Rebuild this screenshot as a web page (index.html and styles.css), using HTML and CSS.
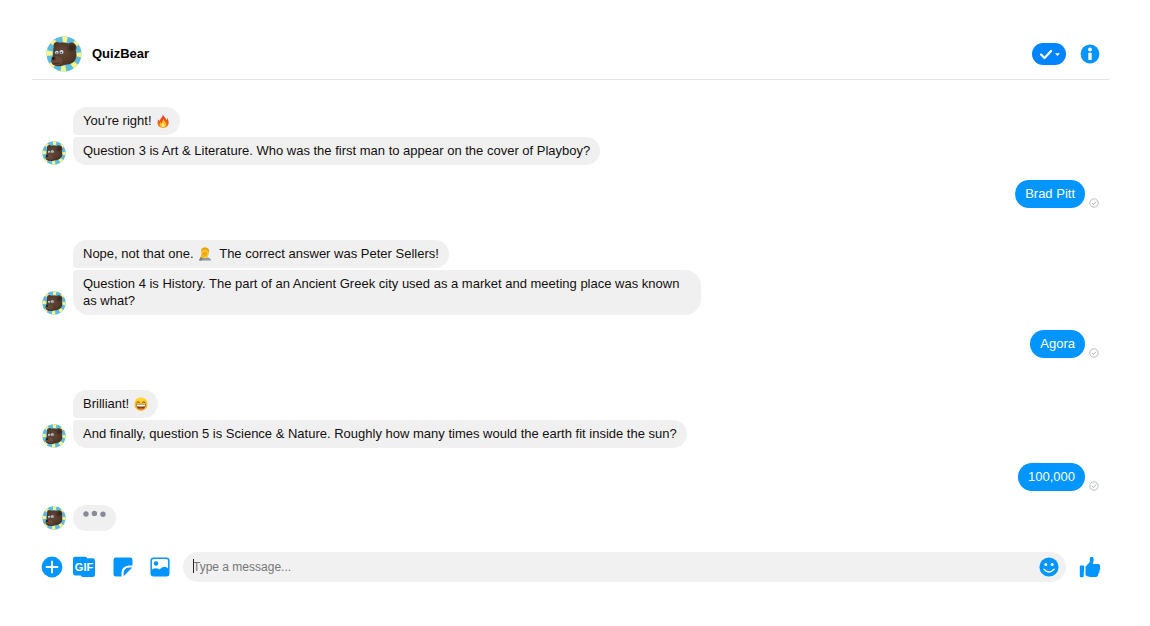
FILE: index.html
```html
<!DOCTYPE html>
<html lang="en">
<head>
<meta charset="utf-8">
<meta name="viewport" content="width=device-width, initial-scale=1">
<title>QuizBear</title>
<link rel="stylesheet" href="styles.css">
</head>
<body>
<svg class="symbols" aria-hidden="true">
  <defs>
    <radialGradient id="fur" cx="45%" cy="40%" r="65%"><stop offset="0" stop-color="#664839"/><stop offset="1" stop-color="#46301f"/></radialGradient>
    <linearGradient id="flame" x1="0" y1="0" x2="0" y2="1"><stop offset="0" stop-color="#e8321c"/><stop offset="1" stop-color="#ff7b16"/></linearGradient>
    <linearGradient id="smile" x1="0" y1="0" x2="0" y2="1"><stop offset="0" stop-color="#ffdc3d"/><stop offset="1" stop-color="#f5a11d"/></linearGradient>
  </defs>
  <symbol id="bear" viewBox="0 0 36 36">
    <circle cx="18" cy="18" r="17.500" fill="#5cbbdf"/>
    <circle cx="18" cy="18" r="14.500" fill="none" stroke="#f5f58c" stroke-width="6" stroke-dasharray="4.800 6.588" stroke-dashoffset="2"/>
    <circle cx="11" cy="9.500" r="3.500" fill="#4f382b"/>
    <path d="M7.500 12C9 7.500 14 6 19 6.800C26 7.500 30.500 13 30.500 19C30.500 25 26 28.800 19 28.800C15 30.800 8 30.800 6 27.500C4.500 24.500 6.500 22 7 19C7.500 16 7 14 7.500 12Z" fill="url(#fur)"/>
    <ellipse cx="11" cy="24.800" rx="5.500" ry="4.600" fill="#69493a"/>
    <ellipse cx="7.500" cy="22.500" rx="1.900" ry="1.400" fill="#2a1b14"/>
    <path d="M7.500 27.300Q11 28.800 14 26.500" fill="none" stroke="#3a261c" stroke-width=".8"/>
    <circle cx="10.800" cy="16.500" r="1.800" fill="#c4dfe8"/><circle cx="15.500" cy="16" r="2" fill="#c4dfe8"/>
    <circle cx="10.800" cy="17" r=".8" fill="#343a40"/><circle cx="15.300" cy="16.600" r=".8" fill="#343a40"/>
    <circle cx="25.500" cy="11.500" r="5" fill="#50382b"/>
    <circle cx="26" cy="11.800" r="3" fill="#3b281e"/>
  </symbol>
  <symbol id="seen" viewBox="0 0 10 10"><circle cx="5" cy="5" r="4.200" fill="none" stroke="#b2b5ba" stroke-width=".9"/><path d="M3 5.100L4.400 6.500L7 3.700" fill="none" stroke="#a8acb2" stroke-width="1"/></symbol>
</svg>

<main class="chat">
  <header class="header">
    <svg class="avatar-large" role="img" aria-label="QuizBear"><use href="#bear"/></svg>
    <h1 class="name">QuizBear</h1>
    <button class="done" type="button" aria-label="Mark as done">
      <svg width="34" height="22" viewBox="0 0 34 22"><path d="M9 11.500L12.500 15L19 8" fill="none" stroke="#fff" stroke-width="2.200" stroke-linecap="round" stroke-linejoin="round"/><path d="M23 10.200H28L25.500 13Z" fill="#fff"/></svg>
    </button>
    <button class="icon-button" type="button" aria-label="Information">
      <svg width="20" height="20" viewBox="0 0 20 20"><circle cx="10" cy="10" r="9.400" fill="#0095ff"/><circle cx="10" cy="5.500" r="1.900" fill="#fff"/><rect x="8.300" y="8.700" width="3.400" height="7.200" rx=".6" fill="#fff"/></svg>
    </button>
  </header>

  <section class="conversation" aria-label="Conversation">
    <div class="incoming">
      <svg class="avatar"><use href="#bear"/></svg>
      <div class="stack">
        <p class="bubble first">You're right! <svg class="emoji" role="img" aria-label="Fire" viewBox="0 0 16 16"><path d="M7.500 .5C9 3 12 5 11.500 7C12.500 6.500 12.800 5.500 12.700 4.500C16 9 15 15.500 8.200 15.700C1.500 15.700 .5 9.800 3 6C3.200 7 3.600 7.500 4.300 8C4.400 5 8.500 3.700 7.500 .5Z" fill="url(#flame)"/><path d="M8.200 5.500C9 8 12.500 10 11.500 13C10.800 15 9.500 15.200 8 15.200C4.500 15.200 3.300 12 5 9.500C5.500 10.500 6 11 6.700 11C6.500 9 8.500 8 8.200 5.500Z" fill="#ffc42b"/><path d="M8.200 10.500C8.800 12 10 12.500 9.500 14Q8.500 15 7.300 14.500Q5.800 13.500 7 12Z" fill="#fff1a0"/></svg></p>
        <p class="bubble last">Question 3 is Art &amp; Literature. Who was the first man to appear on the cover of Playboy?</p>
      </div>
    </div>
    <div class="outgoing"><p class="reply">Brad Pitt</p><svg class="seen"><use href="#seen"/></svg></div>

    <div class="incoming">
      <svg class="avatar"><use href="#bear"/></svg>
      <div class="stack">
        <p class="bubble first">Nope, not that one. <svg class="emoji" role="img" aria-label="Facepalm" viewBox="0 0 16 16"><path d="M2 15.500Q2.500 12 6 12H10.500Q14 12 15 15.500Z" fill="#8798a7"/><path d="M4 7Q3 1 8 .7Q13.500 1 12.200 8Q11.500 13 8.300 13Q4.500 12.500 4 7Z" fill="#ffc52d"/><path d="M3.800 6Q3 1 7 .6Q12 0 12.800 4L12.200 6.500Q11 3 8 3Q5 3 3.800 6Z" fill="#e5a719"/><path d="M1 15.500L3.500 10L4 6.500L9.500 4.800L10.500 5.700L7 7L10.800 6.800L10.800 7.800L7.500 8.600L10 9L7 11L5 14Z" fill="#f7b51d"/><path d="M1 15.500L3 11.500L5.500 13L4.500 15.500Z" fill="#718595"/><path d="M6 7.500L10 6.500M7 9.200L10 8.600" stroke="#c87f16" stroke-width=".6"/></svg>&nbsp; The correct answer was Peter Sellers!</p>
        <p class="bubble last">Question 4 is History. The part of an Ancient Greek city used as a market and meeting place was known as what?</p>
      </div>
    </div>
    <div class="outgoing"><p class="reply">Agora</p><svg class="seen"><use href="#seen"/></svg></div>

    <div class="incoming">
      <svg class="avatar"><use href="#bear"/></svg>
      <div class="stack">
        <p class="bubble first">Brilliant! <svg class="emoji" role="img" aria-label="Grinning face" viewBox="0 0 16 16"><circle cx="8" cy="8" r="7.600" fill="url(#smile)"/><path d="M3 6.500Q4.500 4 6.200 6.300M9.800 6.300Q11.500 4 13 6.500" fill="none" stroke="#633c17" stroke-width="1.100" stroke-linecap="round"/><path d="M2.500 8.200Q8 9 13.500 8.200Q13 14 8 14Q3 14 2.500 8.200Z" fill="#71391a"/><path d="M3 8.500Q8 9.300 13 8.500L12.500 10.600Q8 11.300 3.500 10.600Z" fill="#fff"/><path d="M5.500 13Q8 10.800 10.500 13Q8 14.500 5.500 13Z" fill="#e5563d"/></svg></p>
        <p class="bubble last">And finally, question 5 is Science &amp; Nature. Roughly how many times would the earth fit inside the sun?</p>
      </div>
    </div>
    <div class="outgoing"><p class="reply">100,000</p><svg class="seen"><use href="#seen"/></svg></div>

    <div class="incoming typing-row">
      <svg class="avatar"><use href="#bear"/></svg>
      <div class="typing" role="status" aria-label="QuizBear is typing"><svg width="24" height="8" viewBox="0 0 24 8"><g fill="#858c98"><circle cx="3" cy="4" r="2.700"/><circle cx="11.400" cy="3.400" r="2.700"/><circle cx="20" cy="4.300" r="2.700"/></g></svg></div>
    </div>
  </section>

  <form class="composer">
    <div class="tools">
      <button class="icon-button" type="button" aria-label="More actions"><svg width="22" height="22" viewBox="0 0 22 22"><circle cx="11" cy="11" r="10.400" fill="#0095ff"/><path d="M11 5.500V16.500M5.500 11H16.500" stroke="#fff" stroke-width="1.900" stroke-linecap="round"/></svg></button>
      <button class="gif" type="button"><svg class="gif-shape" viewBox="0 0 24 22" aria-hidden="true"><path d="M3 .8H13Q14.500 .8 15.200 2.200H20.500Q23 2.200 23 4.500V18.500Q23 21 20.500 21H11Q9.500 21 8.800 19.500H3.500Q1 19.500 1 17V3Q1 .8 3 .8Z" fill="#0095ff"/></svg><span class="gif-label">GIF</span></button>
      <button class="icon-button" type="button" aria-label="Sticker"><svg width="20" height="20" viewBox="0 0 20 20"><path d="M3 .6H17Q19.500 .6 19.500 3V8.500H16Q8.500 9 8.500 16V19.500H3Q.5 19.500 .5 17V3Q.5 .6 3 .6Z" fill="#0095ff"/><path d="M19.300 10.500L10.600 19.300V16Q10.800 11 16 10.500Z" fill="#0095ff"/></svg></button>
      <button class="icon-button" type="button" aria-label="Photo"><svg width="20" height="20" viewBox="0 0 20 20"><rect x="1.200" y="1.200" width="17.600" height="17.600" rx="2.500" fill="#fff" stroke="#0095ff" stroke-width="1.500"/><circle cx="6" cy="6.500" r="2.200" fill="#0095ff"/><path d="M1.200 13Q5 9.800 9.500 12.500Q14 7.500 18.800 12V17Q18.800 18.800 17 18.800H3Q1.200 18.800 1.200 17Z" fill="#0095ff"/></svg></button>
    </div>
    <div class="field">
      <input class="message" type="text" placeholder="Type a message..." aria-label="Message">
      <span class="caret" aria-hidden="true"></span>
      <button class="icon-button" type="button" aria-label="Emoji"><svg width="20" height="20" viewBox="0 0 20 20"><circle cx="10" cy="10" r="9.600" fill="#0095ff"/><circle cx="6.800" cy="7.500" r="1.500" fill="#fff"/><circle cx="13.200" cy="7.500" r="1.500" fill="#fff"/><path d="M5 12.200Q10 17.800 15 12.200" fill="none" stroke="#fff" stroke-width="1.500" stroke-linecap="round"/></svg></button>
    </div>
    <button class="icon-button" type="button" aria-label="Send a like"><svg width="22" height="22" viewBox="0 0 22 22"><path d="M2 9.500H4.200Q5.200 9.500 5.200 10.500L4.600 20.300Q4.500 21.300 3.500 21.300H2Q.8 21.300 .8 20.200V10.700Q.8 9.500 2 9.500Z" fill="#0095ff"/><path d="M6.500 10.500L10.500 6.500Q11 4.500 10.800 2.500Q11 .4 12.600 .7Q15.500 1.500 14.500 5L13.800 8H19.500Q22 9 20.900 11.300Q22 13 20.400 14.500Q21 16.700 19.300 17.700Q19.300 21 16.500 21H11.500Q9 21 6.500 19.300Z" fill="#0095ff"/></svg></button>
  </form>
</main>
</body>
</html>
```
FILE: styles.css
```css
* { box-sizing: border-box; }

body {
  margin: 0;
  background: #fff;
  color: #111;
  font: 13px/17px "Liberation Sans", Arial, sans-serif;
}

p, h1 { margin: 0; }

svg { display: block; flex: none; }

button {
  padding: 0;
  border: 0;
  background: none;
  font: inherit;
  cursor: pointer;
}

.symbols {
  position: absolute;
  width: 0;
  height: 0;
}

.chat { padding: 28px 41px 44px 32px; }

.header {
  display: flex;
  align-items: center;
  height: 52px;
  padding: 0 9px 0 14px;
  border-bottom: 1px solid #e4e4e4;
}

.avatar-large {
  width: 36px;
  height: 36px;
}

.name {
  margin-left: 10px;
  font-size: 13px;
  color: #000;
}

.done {
  height: 22px;
  margin-left: auto;
  margin-right: 14px;
  border-radius: 11px;
  background: #0084ff;
}

.conversation { padding: 27px 10px 0; }

.incoming {
  display: flex;
  align-items: flex-end;
  gap: 7px;
}

.avatar {
  width: 24px;
  height: 24px;
}

.stack {
  display: flex;
  flex-direction: column;
  align-items: flex-start;
  gap: 2px;
  max-width: 628px;
}

.bubble {
  padding: 5px 10px 6px;
  background: #f1f0f0;
}

.first { border-radius: 14px 14px 14px 4px; }

.last { border-radius: 4px 16px 16px 16px; }

.emoji {
  display: inline-block;
  width: 14px;
  height: 14px;
  margin-left: 1px;
  vertical-align: -3px;
}

.outgoing {
  display: flex;
  justify-content: flex-end;
  align-items: flex-end;
  gap: 4px;
  margin: 15px 0 32px;
}

.reply {
  padding: 5px 10px 6px;
  border-radius: 14px;
  background: #0095ff;
  color: #fff;
}

.seen {
  width: 10px;
  height: 10px;
}

.typing-row {
  align-items: center;
  margin-top: -18px;
}

.typing {
  width: 43px;
  height: 26px;
  padding: 5px 10px;
  border-radius: 13px;
  background: #f1f0f0;
}

.composer {
  display: flex;
  align-items: center;
  gap: 13px;
  margin-top: 21px;
  padding: 0 8px 0 9px;
}

.tools {
  display: flex;
  align-items: center;
  gap: 17px;
}

.gif {
  display: grid;
  place-items: center;
  width: 24px;
  height: 22px;
  margin-left: -8px;
}

.gif-shape, .gif-label { grid-area: 1 / 1; }

.gif-shape {
  width: 24px;
  height: 22px;
}

.gif-label {
  color: #fff;
  font-size: 11px;
  font-weight: bold;
}

.field {
  position: relative;
  display: flex;
  flex: 1;
  align-items: center;
  height: 30px;
  padding: 0 7px 0 10px;
  border-radius: 15px;
  background: #f1f1f1;
}

.message {
  flex: 1;
  min-width: 0;
  padding: 0;
  border: 0;
  outline: 0;
  background: none;
  color: #111;
  font: inherit;
  font-size: 12px;
}

.message::placeholder {
  color: #777;
  opacity: 1;
}

.caret {
  position: absolute;
  top: 7px;
  left: 10px;
  width: 1px;
  height: 14px;
  background: #222;
}
```
